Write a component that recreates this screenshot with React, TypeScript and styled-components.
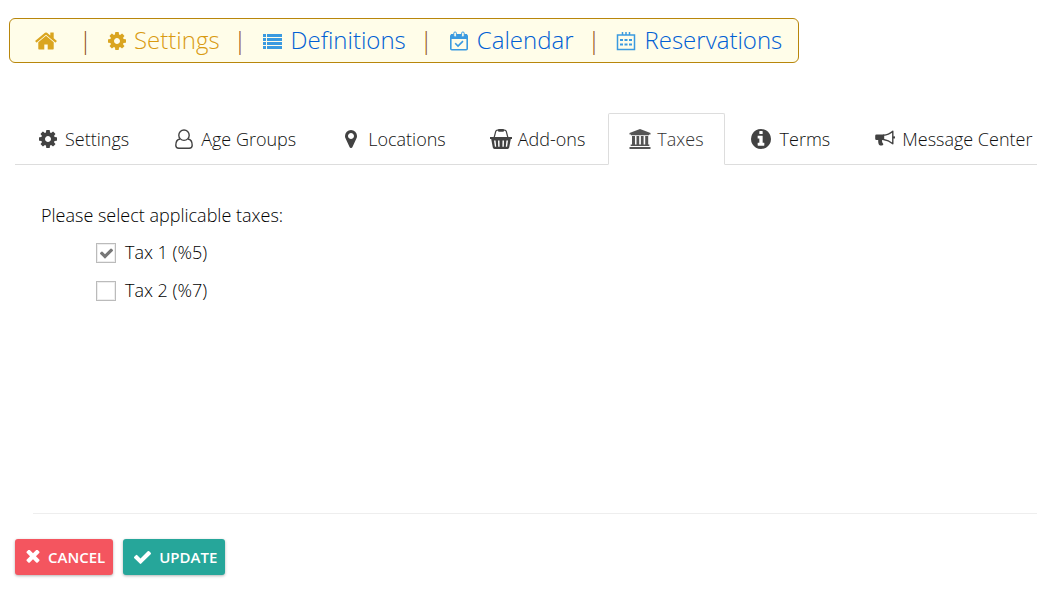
import React from 'react';
import styled, { createGlobalStyle } from 'styled-components';

const GlobalStyle = createGlobalStyle`
  *, *::before, *::after { box-sizing: border-box; }
  body {
    margin: 0;
    background: #fff;
    color: #424242;
    font-family: 'Open Sans', sans-serif;
    font-size: 18px;
    font-weight: 300;
    overflow-x: hidden;
  }
`;

const Page = styled.div`
  padding-top: 18px;
  overflow: hidden;
`;

const MainNav = styled.nav`
  display: flex;
  align-items: center;
  width: max-content;
  height: 45px;
  margin-left: 9px;
  padding: 0 16px 2px 24px;
  border: 1px solid #b8860b;
  border-radius: 6px;
  background: #fffde9;
  font-size: 24px;
  line-height: 32px;
  white-space: nowrap;
`;

const NavLink = styled.a<{ $active?: boolean; $iconOnly?: boolean }>`
  display: inline-flex;
  align-items: center;
  gap: 8px;
  padding-right: ${p => (p.$iconOnly ? 7 : 0)}px;
  color: ${p => (p.$active ? '#d99a10' : '#0060d4')};
  text-decoration: none;
  svg {
    margin-top: 2px;
    color: ${p => (p.$active ? '#daa520' : '#3a9ae0')};
  }
`;

const Divider = styled.span`
  margin: 0 16px 0 14px;
  color: #8f4f14;
`;

const Icon = styled.svg<{ $size: number }>`
  display: block;
  flex: none;
  width: ${p => p.$size}px;
  height: ${p => p.$size}px;
  fill: currentColor;
`;

const TabBar = styled.nav`
  display: flex;
  align-items: flex-end;
  gap: 2px;
  margin: 50px 0 0 15px;
  white-space: nowrap;
  box-shadow: inset 0 -1px #ddd;
`;

const Tab = styled.a<{ $active?: boolean }>`
  display: flex;
  flex: none;
  align-items: center;
  gap: 5px;
  height: 52px;
  padding: 0 20px 0 19px;
  border: 1px solid ${p => (p.$active ? '#ddd' : 'transparent')};
  border-bottom-color: ${p => (p.$active ? '#fff' : 'transparent')};
  border-radius: 2px 2px 0 0;
  color: ${p => (p.$active ? '#333' : '#111')};
  line-height: 24px;
  text-decoration: none;
  svg { color: ${p => (p.$active ? '#555' : '#424242')}; }
  &:first-child { padding-left: 20px; }
  &:last-child { padding-right: 0; }
`;

const TabIcon = styled.span<{ $wide?: boolean }>`
  display: flex;
  justify-content: center;
  width: ${p => (p.$wide ? 28 : 24)}px;
`;

const Panel = styled.fieldset`
  min-height: 349px;
  margin: 0 0 0 33px;
  padding: 38px 0 0 8px;
  border: 0;
  border-bottom: 1px solid #eee;
`;

const Prompt = styled.legend`
  float: left;
  width: 100%;
  padding: 0;
  color: #000;
  line-height: 24px;
`;

const TaxList = styled.div`
  display: flex;
  clear: both;
  flex-direction: column;
  align-items: flex-start;
  gap: 14px;
  padding: 13px 0 0 55px;
`;

const TaxOption = styled.label`
  display: flex;
  align-items: center;
  gap: 9px;
  color: #000;
  line-height: 24px;
`;

const Box = styled.span`
  display: grid;
  place-items: center;
  padding-top: 2px;
  > * { grid-area: 1 / 1; }
  input:not(:checked) + svg { visibility: hidden; }
  svg { color: #777; pointer-events: none; }
`;

const Check = styled.input`
  appearance: none;
  width: 20px;
  height: 20px;
  margin: 0;
  border: 1px solid #bbb;
  background: #fff;
  box-shadow: inset 0 0 0 1px #eee;
`;

const Actions = styled.div`
  display: flex;
  gap: 10px;
  padding: 25px 15px;
`;

const Button = styled.button<{ $tone: string }>`
  display: flex;
  align-items: center;
  gap: 8px;
  height: 36px;
  padding: 0 8px 0 11px;
  border: 0;
  border-radius: 3px;
  background: ${p => p.$tone};
  box-shadow: 0 1px 3px rgba(0, 0, 0, 0.3);
  color: #fff;
  font: 600 15px/20px 'Open Sans', sans-serif;
  text-transform: uppercase;
`;

type IconName = keyof typeof paths;

const cog = 'M1152 896q0-106-75-181t-181-75-181 75-75 181 75 181 181 75 181-75 75-181zm512-109v222q0 12-8 23t-20 13l-185 28q-19 54-39 91 35 50 107 138 10 12 10 25t-9 23q-27 37-99 108t-94 71q-12 0-26-9l-138-108q-44 23-91 38-16 136-29 186-7 28-36 28h-222q-14 0-24.5-8.5t-11.5-21.5l-28-184q-49-16-90-37l-141 107q-10 9-25 9-14 0-25-11-126-114-165-168-7-10-7-23 0-12 8-23 15-21 51-66.5t54-70.5q-27-50-41-99l-183-27q-13-2-21-12.5t-8-23.5v-222q0-12 8-23t19-13l186-28q14-46 39-92-40-57-107-138-10-12-10-24 0-10 9-23 26-36 98.5-107.5t94.5-71.5q13 0 26 10l138 107q44-23 91-38 16-136 29-186 7-28 36-28h222q14 0 24.5 8.5t11.5 21.5l28 184q49 16 90 37l142-107q9-9 24-9 13 0 25 10 129 119 165 170 7 8 7 22 0 12-8 23-15 21-51 66.5t-54 70.5q26 50 41 98l183 28q13 2 21 12.5t8 23.5z';

const line = { fill: 'none', stroke: 'currentColor' } as const;

const paths = {
  home: { box: '0 128 1792 1536', art: <path d="M1472 992v480q0 26-19 45t-45 19h-384v-384h-256v384h-384q-26 0-45-19t-19-45v-480q0-1 .5-3t.5-3l575-474 575 474q1 2 1 6zm223-69l-62 74q-8 9-21 11h-3q-13 0-21-7l-692-577-692 577q-12 8-24 7-13-2-21-11l-62-74q-8-10-7-23.5t11-21.5l719-599q32-26 76-26t76 26l244 204v-195q0-14 9-23t23-9h192q14 0 23 9t9 23v408l219 182q10 8 11 21.5t-7 23.5z" /> },
  cog: { box: '128 128 1536 1536', art: <path d={cog} /> },
  list: { box: '0 0 20 20', art: <path d="M0 3h3v3H0zM0 7h3v3H0zM0 11h3v3H0zM0 15h3v3H0zM4 3h15v3H4zM4 7h15v3H4zM4 11h15v3H4zM4 15h15v3H4z" /> },
  calendarCheck: {
    box: '0 0 20 20',
    art: (
      <>
        <rect x="1.8" y="4" width="16.4" height="14.8" rx="1" strokeWidth="1.6" {...line} />
        <path d="M2 3h16v5H2z" />
        <rect x="4.8" y="1" width="2.6" height="5" rx="1.2" fill="#fffde9" stroke="currentColor" />
        <rect x="12.6" y="1" width="2.6" height="5" rx="1.2" fill="#fffde9" stroke="currentColor" />
        <path d="M6.2 12.3l2.8 2.8 5-5" strokeWidth="1.6" {...line} />
      </>
    ),
  },
  calendar: {
    box: '0 0 20 20',
    art: (
      <>
        <path d="M1.5 4h17v14.5h-17zM6.5 1v3M10 1v3M13.5 1v3" strokeWidth="1.5" {...line} />
        <path d="M4 8h3v2H4zM8.5 8h3v2h-3zM13 8h3v2h-3zM4 12.5h3v2H4zM8.5 12.5h3v2h-3zM13 12.5h3v2h-3z" />
      </>
    ),
  },
  user: { box: '0 0 20 20', art: <><path d="M6 10C3 10.5 1.8 13 1.8 16.2c0 1.8 1.2 3 3 3h10.4c1.8 0 3-1.2 3-3C18.2 13 17 10.5 14 10" strokeWidth="1.4" {...line} /><circle cx="10" cy="6.2" r="5.2" strokeWidth="1.4" {...line} /></> },
  marker: { box: '128 128 1536 1536', art: <path d="M1152 640q0-106-75-181t-181-75-181 75-75 181 75 181 181 75 181-75 75-181zm256 0q0 109-33 179l-364 774q-16 33-47.5 52t-67.5 19-67.5-19-46.5-52l-365-774q-33-70-33-179 0-212 150-362t362-150 362 150 150 362z" /> },
  basket: {
    box: '0 0 22 22',
    art: (
      <>
        <path d="M4 10l1.7-6.5q.4-1.3 1.7-1.3h7.2q1.3 0 1.7 1.3L18 10" strokeWidth="1.2" {...line} />
        <rect x="8" y="1" width="6" height="2.8" rx="1" />
        <path fillRule="evenodd" d="M0 9h22v2h-1.2l-1.6 8.6q-.3 1.4-1.6 1.4H4.4q-1.3 0-1.6-1.4L1.2 11H0zM4 12.5l.9 6.2h1.3l-.6-6.2zM8 12.5l.2 6.2h1.4l-.1-6.2zM12.5 12.5l-.1 6.2h1.4l.2-6.2zM16.4 12.5l-.6 6.2h1.3l.9-6.2z" />
      </>
    ),
  },
  bank: { box: '0 0 22 22', art: <path d="M11 1l10.5 4v1.5H20v.8H2v-.8H.5V5zM3 8h3v8.5H3zM7.5 8h2.7v8.5H7.5zM11.9 8h2.7v8.5h-2.7zM16.2 8h3v8.5h-3zM1.7 16.5h18.6V18H1.7zM.5 19h21v2H.5z" /> },
  info: { box: '128 128 1536 1536', art: <path d="M1152 1376v-160q0-14-9-23t-23-9h-96v-512q0-14-9-23t-23-9h-320q-14 0-23 9t-9 23v160q0 14 9 23t23 9h96v320h-96q-14 0-23 9t-9 23v160q0 14 9 23t23 9h448q14 0 23-9t9-23zm-128-896v-160q0-14-9-23t-23-9h-192q-14 0-23 9t-9 23v160q0 14 9 23t23 9h192q14 0 23-9t9-23zm640 416q0 209-103 385.5t-279.5 279.5-385.5 103-385.5-103-279.5-279.5-103-385.5 103-385.5 279.5-279.5 385.5-103 385.5 103 279.5 279.5 103 385.5z" /> },
  bullhorn: {
    box: '0 0 20 20',
    art: (
      <>
        <path d="M1.5 5.5H9V11H7.2c-.5 1.5.1 2.7 1 3.8.4.6-.1 1.2-.6 1.5-1 .5-2.5.4-3.3-.2C3.8 15.5 3 14 3.2 11H1.5Q.2 11 .2 9.7V6.8Q.2 5.5 1.5 5.5z" />
        <path d="M8.5 6.2q5-.2 9.3-4v12.5q-4.3-3.6-9.3-4.2z" strokeWidth="1.4" strokeLinejoin="round" {...line} />
        <circle cx="19" cy="8.4" r="1.2" />
      </>
    ),
  },
  times: { box: '256 384 1280 1280', art: <path d="M1490 1322q0 40-28 68l-136 136q-28 28-68 28t-68-28l-294-294-294 294q-28 28-68 28t-68-28l-136-136q-28-28-28-68t28-68l294-294-294-294q-28-28-28-68t28-68l136-136q28-28 68-28t68 28l294 294 294-294q28-28 68-28t68 28l136 136q28 28 28 68t-28 68l-294 294 294 294q28 28 28 68z" /> },
  check: { box: '121 162 1550 1550', art: <path d="M1671 566q0 40-28 68l-724 724-136 136q-28 28-68 28t-68-28l-136-136-362-362q-28-28-28-68t28-68l136-136q28-28 68-28t68 28l294 295 656-657q28-28 68-28t68 28l136 136q28 28 28 68z" /> },
};

function Glyph({ name, size }: { name: IconName; size: number }) {
  return (
    <Icon $size={size} viewBox={paths[name].box} aria-hidden="true">
      {paths[name].art}
    </Icon>
  );
}

const sections: { icon: IconName; size: number; label?: string; active?: boolean }[] = [
  { icon: 'home', size: 24, active: true },
  { icon: 'cog', size: 18, label: 'Settings', active: true },
  { icon: 'list', size: 20, label: 'Definitions' },
  { icon: 'calendarCheck', size: 20, label: 'Calendar' },
  { icon: 'calendar', size: 20, label: 'Reservations' },
];

const tabs: { icon: IconName; size: number; label: string; wide?: boolean }[] = [
  { icon: 'cog', size: 18, label: 'Settings' },
  { icon: 'user', size: 20, label: 'Age Groups' },
  { icon: 'marker', size: 18, label: 'Locations' },
  { icon: 'basket', size: 22, label: 'Add-ons' },
  { icon: 'bank', size: 22, label: 'Taxes' },
  { icon: 'info', size: 20, label: 'Terms', wide: true },
  { icon: 'bullhorn', size: 20, label: 'Message Center' },
];

export default function App() {
  return (
    <Page>
      <GlobalStyle />
      <MainNav aria-label="Main">
        {sections.map((s, i) => (
          <React.Fragment key={s.icon}>
            {i > 0 && <Divider>|</Divider>}
            <NavLink href="#" $active={s.active} $iconOnly={!s.label} aria-label={s.label ?? 'Home'}>
              <Glyph name={s.icon} size={s.size} />
              {s.label}
            </NavLink>
          </React.Fragment>
        ))}
      </MainNav>
      <TabBar aria-label="Settings sections">
        {tabs.map(t => (
          <Tab key={t.label} href="#" $active={t.label === 'Taxes'}>
            <TabIcon $wide={t.wide}>
              <Glyph name={t.icon} size={t.size} />
            </TabIcon>
            {t.label}
          </Tab>
        ))}
      </TabBar>
      <form onSubmit={e => e.preventDefault()}>
        <Panel>
          <Prompt>Please select applicable taxes:</Prompt>
          <TaxList>
            {['Tax 1 (%5)', 'Tax 2 (%7)'].map((tax, i) => (
              <TaxOption key={tax}>
                <Box>
                  <Check type="checkbox" defaultChecked={i === 0} />
                  <Glyph name="check" size={13} />
                </Box>
                {tax}
              </TaxOption>
            ))}
          </TaxList>
        </Panel>
        <Actions>
          <Button type="button" $tone="#f4555f">
            <Glyph name="times" size={14} />
            Cancel
          </Button>
          <Button type="submit" $tone="#26a69a">
            <Glyph name="check" size={17} />
            Update
          </Button>
        </Actions>
      </form>
    </Page>
  );
}
